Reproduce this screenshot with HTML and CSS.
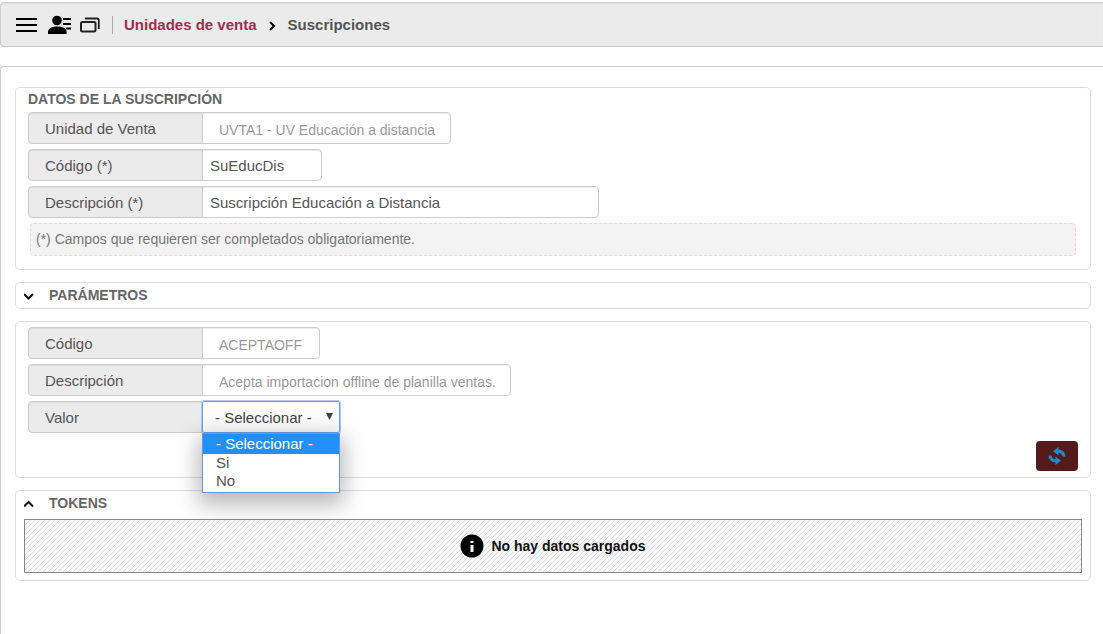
FILE: index.html
```html
<!DOCTYPE html>
<html lang="es">
<head>
<meta charset="utf-8">
<meta name="viewport" content="width=device-width, initial-scale=1">
<title>Suscripciones</title>
<link rel="stylesheet" href="styles.css">
</head>
<body>
<header class="topbar">
  <button class="icon-button" type="button" aria-label="Menú">
    <svg width="22" height="16" viewBox="0 0 22 16"><path d="M0 2h21M0 8h21M0 14h21" stroke="#000" stroke-width="2"/></svg>
  </button>
  <button class="icon-button icon-user" type="button" aria-label="Usuario">
    <svg width="24" height="20" viewBox="0 0 24 20"><circle cx="10" cy="5.500" r="4.800"/><path d="M1 19v-2c0-4 4.500-5.500 9.300-5.500s9.300 1.500 9.300 5.500v2z"/><path d="M16 4h8M16 9h8M19 13.500h5" stroke="#000" stroke-width="2"/></svg>
  </button>
  <button class="icon-button" type="button" aria-label="Ventanas">
    <svg width="20" height="16" viewBox="0 0 20 16" fill="none" stroke="#222"><rect x="1" y="5" width="14.500" height="9.500" rx="1.500" stroke-width="2"/><path d="M5 1.500h12q1.800 0 1.800 1.800v8.700" stroke-width="1.800"/></svg>
  </button>
  <nav class="breadcrumb" aria-label="Ruta">
    <a class="breadcrumb-link" href="#">Unidades de venta</a>
    <svg width="7" height="12" viewBox="0 0 7 12" fill="none" stroke="#000" stroke-width="2"><path d="M1 3l4 4-4 4"/></svg>
    <span>Suscripciones</span>
  </nav>
</header>

<main class="panel">
  <section class="card card-data">
    <h2 class="card-title">DATOS DE LA SUSCRIPCIÓN</h2>
    <div class="fields">
      <div class="field"><label class="field-label" for="unidad">Unidad de Venta</label><input class="field-input is-readonly size-m" id="unidad" value="UVTA1 - UV Educación a distancia" readonly></div>
      <div class="field"><label class="field-label" for="codigo">Código (*)</label><input class="field-input size-s" id="codigo" value="SuEducDis"></div>
      <div class="field"><label class="field-label" for="descripcion">Descripción (*)</label><input class="field-input size-xl" id="descripcion" value="Suscripción Educación a Distancia"></div>
    </div>
    <p class="note">(*) Campos que requieren ser completados obligatoriamente.</p>
  </section>

  <section class="card">
    <h2><button class="toggle" type="button" aria-expanded="true"><svg width="12" height="8" viewBox="0 0 12 8" fill="none" stroke="#111" stroke-width="2"><path d="M0 2l4.500 4.500L9 2"/></svg><span>PARÁMETROS</span></button></h2>
  </section>

  <section class="card card-params">
    <div class="fields">
      <div class="field"><label class="field-label" for="p-codigo">Código</label><input class="field-input is-readonly size-xs" id="p-codigo" value="ACEPTAOFF" readonly></div>
      <div class="field"><label class="field-label" for="p-desc">Descripción</label><input class="field-input is-readonly size-l" id="p-desc" value="Acepta importacion offline de planilla ventas." readonly></div>
      <div class="field">
        <label class="field-label" for="valor">Valor</label>
        <div class="select-wrap">
          <select class="select" id="valor"><option>- Seleccionar -</option><option>Si</option><option>No</option></select>
          <svg class="select-arrow" width="8" height="8" viewBox="0 0 8 8"><path d="M1 0h7L4.500 7z" fill="#444"/></svg>
          <ul class="options" role="listbox" aria-label="Valor">
            <li class="option is-active" role="option" aria-selected="true">- Seleccionar -</li>
            <li class="option" role="option" aria-selected="false">Si</li>
            <li class="option" role="option" aria-selected="false">No</li>
          </ul>
        </div>
      </div>
    </div>
    <div class="actions">
      <button class="refresh" type="button" aria-label="Actualizar"><svg width="18" height="18" viewBox="0 0 18 18" fill="#2585c7"><path d="M10.500 0v2.600c4 .2 6.800 3 7 7h-3c-.3-2.200-1.700-3.700-4-3.900v2.800L5 4.200z"/><path d="M7.500 18v-2.600c-4-.2-6.800-3-7-7h3c.3 2.200 1.700 3.700 4 3.900V9.500L13 13.800z"/></svg></button>
    </div>
  </section>

  <section class="card">
    <h2><button class="toggle" type="button" aria-expanded="true"><svg width="12" height="8" viewBox="0 0 12 8" fill="none" stroke="#111" stroke-width="2"><path d="M0 6.500L4.500 2 9 6.500"/></svg><span>TOKENS</span></button></h2>
    <div class="empty">
      <svg width="24" height="24" viewBox="0 0 24 24"><circle cx="12" cy="12" r="11.500"/><path d="M10.500 7h3v2h-3zM10.500 11h3v7h-3z" fill="#fff"/></svg>
      <span>No hay datos cargados</span>
    </div>
  </section>
</main>
</body>
</html>
```

FILE: styles.css
```css
* { box-sizing: border-box; }

body {
  display: flex;
  flex-direction: column;
  gap: 19px;
  min-height: 100vh;
  margin: 0;
  padding-top: 2px;
  background: #fff;
  color: #555;
  font-family: "Liberation Sans", Arial, sans-serif;
  font-size: 15px;
}

h2, p, ul { margin: 0; padding: 0; }
h2 { font-size: 14px; line-height: 16px; color: #666; }
button, input, select { font-family: inherit; }

.topbar {
  display: flex;
  align-items: center;
  gap: 9px;
  height: 45px;
  padding: 0 15px;
  border: 1px solid #ccc;
  border-right: 0;
  border-radius: 4px 0 0 4px;
  background: #ebebeb;
  box-shadow: inset 0 1px 1px #ddd;
}

.icon-button {
  display: flex;
  padding: 0;
  border: 0;
  background: none;
}

.breadcrumb {
  display: flex;
  align-items: center;
  gap: 12px;
  margin-left: 3px;
  padding-left: 11px;
  border-left: 1px solid #aaa;
  font-weight: bold;
  line-height: 18px;
}

.breadcrumb-link { color: #9e2f50; text-decoration: none; }

.panel {
  display: flex;
  flex: 1;
  flex-direction: column;
  gap: 12px;
  padding: 20px 12px 20px 14px;
  border: 1px solid #ccc;
  border-right: 0;
  border-bottom: 0;
  border-radius: 4px 0 0 0;
}

.card {
  padding: 4px 8px;
  border: 1px solid #ddd;
  border-radius: 5px;
}

.card-data { padding: 3px 12px 13px; }
.card-params { padding: 5px 12px 6px; }
.card-title { margin-bottom: 5px; }

.fields {
  display: flex;
  flex-direction: column;
  gap: 5px;
}

.field { display: flex; height: 32px; }

.field-label {
  width: 175px;
  padding-left: 16px;
  border: 1px solid #ccc;
  border-radius: 4px 0 0 4px;
  background: #ebebeb;
  box-shadow: inset 0 1px 1px #ddd;
  line-height: 31px;
}

.field-input {
  margin-left: -1px;
  padding: 0 7px;
  border: 1px solid #ccc;
  border-radius: 0 4px 4px 0;
  background: #fff;
  box-shadow: inset 0 1px 1px #eee;
  color: #555;
  font-size: 15px;
}

.is-readonly {
  padding: 4px 8px 0 16px;
  color: #999;
  font-size: 14px;
}

.size-xs { width: 118px; }
.size-s { width: 120px; }
.size-m { width: 249px; }
.size-l { width: 309px; }
.size-xl { width: 397px; }

.note {
  margin: 5px 2px 0;
  padding: 0 5px;
  border: 1px dashed #f0d4d8;
  border-radius: 4px;
  background: #f3f3f3;
  color: #777;
  font-size: 14px;
  line-height: 31px;
}

.toggle {
  display: flex;
  align-items: center;
  gap: 13px;
  padding: 0;
  border: 0;
  background: none;
  color: #666;
  font-size: 14px;
  font-weight: bold;
  line-height: 17px;
}

.select-wrap {
  position: relative;
  width: 138px;
  margin-left: -1px;
}

.select {
  width: 100%;
  height: 32px;
  padding: 0 12px;
  border: 1px solid #6f9fe8;
  border-radius: 2px;
  outline: 1px solid #a9c8fa;
  appearance: none;
  background: linear-gradient(#fff, #fafafa);
  color: #444;
  font-size: 15px;
}

.select-arrow {
  position: absolute;
  top: 12px;
  right: 7px;
}

.options {
  position: absolute;
  top: 32px;
  left: 0;
  z-index: 1;
  width: 100%;
  padding-bottom: 2px;
  border: 1px solid #6797dc;
  background: #fff;
  box-shadow: 0 8px 22px 4px rgba(0, 0, 0, .28);
  list-style: none;
}

.option {
  padding-left: 13px;
  line-height: 18px;
}

.is-active {
  background: #2090ff;
  color: #fff;
  line-height: 20px;
}

.actions {
  display: flex;
  justify-content: flex-end;
  padding-top: 8px;
}

.refresh {
  display: flex;
  align-items: center;
  justify-content: center;
  width: 42px;
  height: 30px;
  padding: 0;
  border: 0;
  border-radius: 4px;
  background: #541b1b;
}

.empty {
  display: flex;
  align-items: center;
  justify-content: center;
  gap: 7px;
  height: 54px;
  margin: 7px 0 3px;
  border: 1px solid #888;
  background: linear-gradient(135deg, #ddd 10%, #fafafa 10% 50%, #ddd 50% 60%, #fafafa 60%) 0 0 / 5px 5px;
  color: #111;
  font-size: 14px;
  font-weight: bold;
}
```
